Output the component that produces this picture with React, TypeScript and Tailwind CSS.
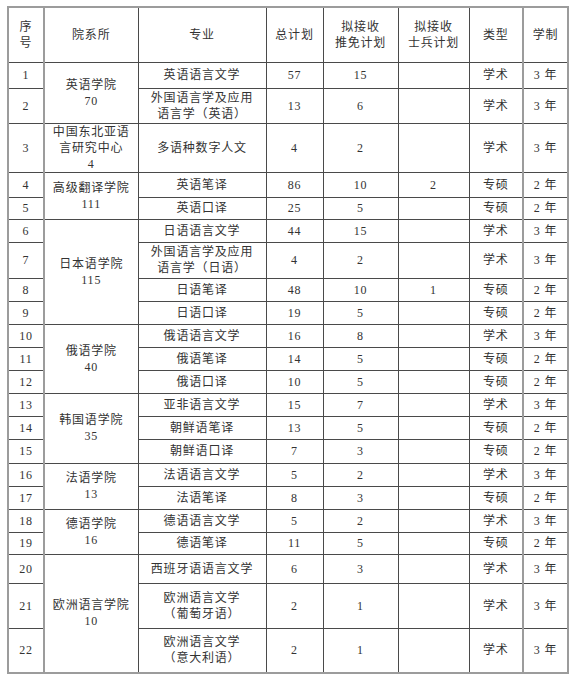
import React from 'react'

type Row = {
    no: number
    major: string[]
    total: string
    tm: string
    sb: string
    type: string
    years: string
    h: number
    dept?: { name: string[]; count: string; span: number }
}

const rows: Row[] = [
    { no: 1, major: ['英语语言文学'], total: '57', tm: '15', sb: '', type: '学术', years: '3 年', h: 26, dept: { name: ['英语学院'], count: '70', span: 2 } },
    { no: 2, major: ['外国语言学及应用', '语言学（英语）'], total: '13', tm: '6', sb: '', type: '学术', years: '3 年', h: 35 },
    { no: 3, major: ['多语种数字人文'], total: '4', tm: '2', sb: '', type: '学术', years: '3 年', h: 48, dept: { name: ['中国东北亚语', '言研究中心'], count: '4', span: 1 } },
    { no: 4, major: ['英语笔译'], total: '86', tm: '10', sb: '2', type: '专硕', years: '2 年', h: 25, dept: { name: ['高级翻译学院'], count: '111', span: 2 } },
    { no: 5, major: ['英语口译'], total: '25', tm: '5', sb: '', type: '专硕', years: '2 年', h: 22 },
    { no: 6, major: ['日语语言文学'], total: '44', tm: '15', sb: '', type: '学术', years: '3 年', h: 23, dept: { name: ['日本语学院'], count: '115', span: 4 } },
    { no: 7, major: ['外国语言学及应用', '语言学（日语）'], total: '4', tm: '2', sb: '', type: '学术', years: '3 年', h: 36 },
    { no: 8, major: ['日语笔译'], total: '48', tm: '10', sb: '1', type: '专硕', years: '2 年', h: 23 },
    { no: 9, major: ['日语口译'], total: '19', tm: '5', sb: '', type: '专硕', years: '2 年', h: 23 },
    { no: 10, major: ['俄语语言文学'], total: '16', tm: '8', sb: '', type: '学术', years: '3 年', h: 23, dept: { name: ['俄语学院'], count: '40', span: 3 } },
    { no: 11, major: ['俄语笔译'], total: '14', tm: '5', sb: '', type: '专硕', years: '2 年', h: 23 },
    { no: 12, major: ['俄语口译'], total: '10', tm: '5', sb: '', type: '专硕', years: '2 年', h: 23 },
    { no: 13, major: ['亚非语言文学'], total: '15', tm: '7', sb: '', type: '学术', years: '3 年', h: 23, dept: { name: ['韩国语学院'], count: '35', span: 3 } },
    { no: 14, major: ['朝鲜语笔译'], total: '13', tm: '5', sb: '', type: '专硕', years: '2 年', h: 23 },
    { no: 15, major: ['朝鲜语口译'], total: '7', tm: '3', sb: '', type: '专硕', years: '2 年', h: 24 },
    { no: 16, major: ['法语语言文学'], total: '5', tm: '2', sb: '', type: '学术', years: '3 年', h: 23, dept: { name: ['法语学院'], count: '13', span: 2 } },
    { no: 17, major: ['法语笔译'], total: '8', tm: '3', sb: '', type: '专硕', years: '2 年', h: 23 },
    { no: 18, major: ['德语语言文学'], total: '5', tm: '2', sb: '', type: '学术', years: '3 年', h: 23, dept: { name: ['德语学院'], count: '16', span: 2 } },
    { no: 19, major: ['德语笔译'], total: '11', tm: '5', sb: '', type: '专硕', years: '2 年', h: 22 },
    { no: 20, major: ['西班牙语语言文学'], total: '6', tm: '3', sb: '', type: '学术', years: '3 年', h: 29, dept: { name: ['欧洲语言学院'], count: '10', span: 3 } },
    { no: 21, major: ['欧洲语言文学', '（葡萄牙语）'], total: '2', tm: '1', sb: '', type: '学术', years: '3 年', h: 45 },
    { no: 22, major: ['欧洲语言文学', '（意大利语）'], total: '2', tm: '1', sb: '', type: '学术', years: '3 年', h: 45 },
]

const td = 'border border-[#4a4a4a] text-center align-middle p-0'
const grayL = 'border-l-2 border-l-[#9c9c9c]'

function Lines({ lines }: { lines: string[] }) {
    return (
        <>
            {lines.map((l, i) => (
                <div key={i}>{l}</div>
            ))}
        </>
    )
}

export default function App() {
    return (
        <div className="bg-white w-[575px] h-[678px] pl-[7px] pt-[6px] font-['Liberation_Serif','Noto_Sans_CJK_SC',serif] text-[12px] leading-[16px] tracking-[0.8px] text-[#333]">
            <table className="table-fixed border-collapse w-[560px] border-2 border-[#9c9c9c]">
                <colgroup>
                    <col className="w-[36px]" />
                    <col className="w-[94px]" />
                    <col className="w-[128px]" />
                    <col className="w-[57px]" />
                    <col className="w-[75px]" />
                    <col className="w-[71px]" />
                    <col className="w-[54px]" />
                    <col className="w-[45px]" />
                </colgroup>
                <thead>
                    <tr className="h-[55px]">
                        <th className={`${td} font-normal`}>
                            <div>序</div>
                            <div>号</div>
                        </th>
                        <th className={`${td} ${grayL} font-normal`}>院系所</th>
                        <th className={`${td} font-normal`}>专业</th>
                        <th className={`${td} font-normal`}>总计划</th>
                        <th className={`${td} font-normal`}>
                            <div>拟接收</div>
                            <div>推免计划</div>
                        </th>
                        <th className={`${td} font-normal`}>
                            <div>拟接收</div>
                            <div>士兵计划</div>
                        </th>
                        <th className={`${td} font-normal`}>类型</th>
                        <th className={`${td} ${grayL} font-normal`}>学制</th>
                    </tr>
                </thead>
                <tbody>
                    {rows.map((r) => (
                        <tr key={r.no} style={{ height: r.h }}>
                            <td className={td}>{r.no}</td>
                            {r.dept && (
                                <td className={`${td} ${grayL}`} rowSpan={r.dept.span}>
                                    <Lines lines={r.dept.name} />
                                    <div>{r.dept.count}</div>
                                </td>
                            )}
                            <td className={td}>
                                <Lines lines={r.major} />
                            </td>
                            <td className={td}>{r.total}</td>
                            <td className={td}>{r.tm}</td>
                            <td className={td}>{r.sb}</td>
                            <td className={td}>{r.type}</td>
                            <td className={`${td} ${grayL}`}>{r.years}</td>
                        </tr>
                    ))}
                </tbody>
            </table>
        </div>
    )
}
